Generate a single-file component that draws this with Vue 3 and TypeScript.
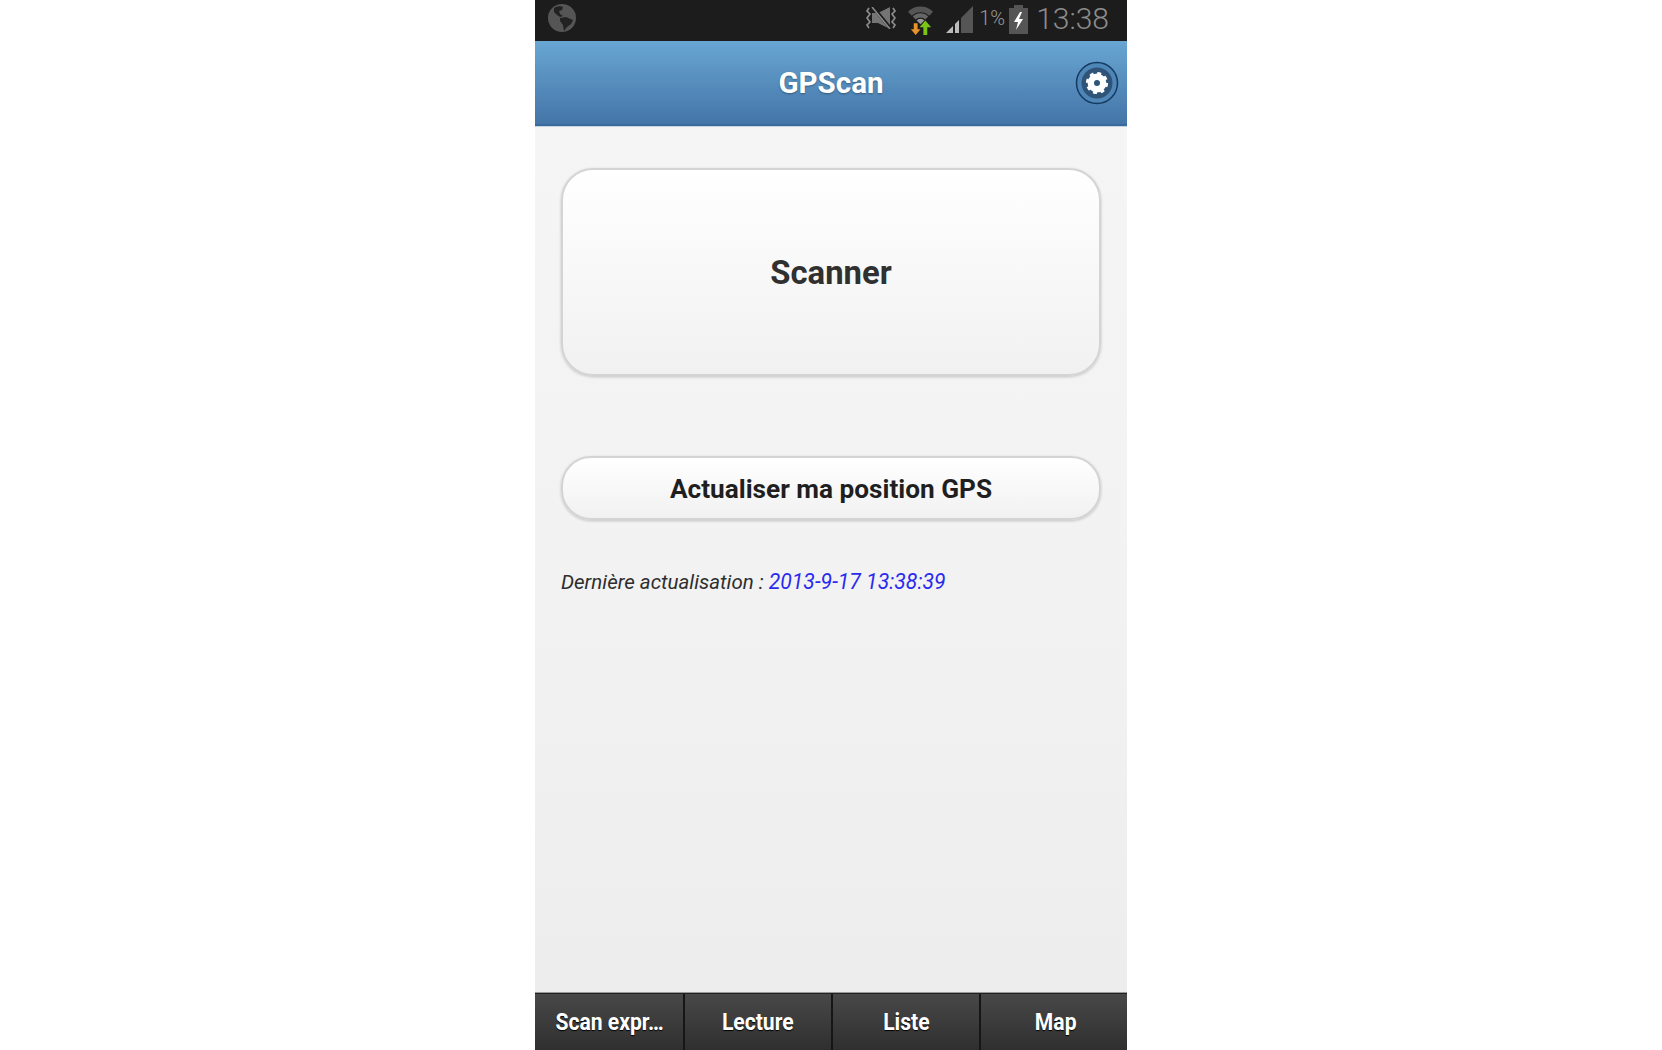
<template>
  <div class="page">
    <div class="phone">
      <div class="status-bar">
        <svg class="globe" width="30" height="30" viewBox="0 0 30 30">
          <circle cx="15" cy="15" r="14" fill="#555" />
          <path d="M7 5 C10 3 14 3 16 4 L15 7 L12 8 L13 11 L16 13 L13 14 L10 12 L7 9 Z" fill="#222" />
          <path d="M13 15 L19 14 L26 17 L24 21 L20 24 L17 28 L16 22 L13 18 Z" fill="#222" />
        </svg>
        <div class="status-right">
          <svg class="ic-vib" width="30" height="22" viewBox="0 0 30 22">
            <path d="M6 6 H12 L24 0 V22 L12 16 H6 Z" fill="#747474" />
            <path d="M7 0 L25 22" stroke="#1c1c1c" stroke-width="3.4" />
            <path d="M6 0 L24 22" stroke="#8c8c8c" stroke-width="1.5" />
            <path d="M3 1 L1 4 L4 7 L1 11 L4 15 L1 18 L3 21" fill="none" stroke="#8c8c8c" stroke-width="1.7" />
            <path d="M27 1 L29 4 L26 7 L29 11 L26 15 L29 18 L27 21" fill="none" stroke="#8c8c8c" stroke-width="1.7" />
          </svg>
          <svg class="ic-wifi" width="27" height="31" viewBox="0 0 28 32">
            <path d="M1 8 A18 18 0 0 1 27 8 L23 12 A13 13 0 0 0 5 12 Z" fill="#555" />
            <path d="M6 13 A11 11 0 0 1 22 13 L19 16 A7 7 0 0 0 9 16 Z" fill="#666" />
            <path d="M10 17 A5.5 5.5 0 0 1 18 17 L14 21 Z" fill="#999" />
            <path d="M7 20 H11 V26 H14 L9 32 L4 26 H7 Z" fill="#e8922a" />
            <path d="M17 32 H21 V24 H25 L19 17 L13 24 H17 Z" fill="#7cc416" />
          </svg>
          <svg class="ic-signal" width="27" height="27" viewBox="0 0 27 27">
            <path d="M0 27 L7 20 V27 Z" fill="#bbb" />
            <path d="M9 18 L13 14 V27 H9 Z" fill="#bbb" />
            <path d="M15 12 L27 0 V27 H15 Z" fill="#555" />
          </svg>
          <span class="batt-pct">1%</span>
          <svg class="ic-batt" width="19" height="29" viewBox="0 0 19 29">
            <path d="M5 0 H14 V3 H19 V29 H0 V3 H5 Z" fill="#555" />
            <path d="M11 7 L5 17 H9 L7 25 L14 14 H10 L13 7 Z" fill="#fff" />
          </svg>
          <span class="time">13:38</span>
        </div>
      </div>

      <header class="app-header">
        <h1>GPScan</h1>
        <button class="settings" type="button">
          <svg width="44" height="44" viewBox="0 0 44 44">
            <circle cx="22" cy="22" r="20.5" fill="#4e86b8" stroke="#143a60" stroke-width="1.5" />
            <circle cx="22" cy="22" r="15.5" fill="#2f5478" />
            <circle cx="22" cy="22" r="6.2" fill="none" stroke="#fff" stroke-width="6.4" />
            <circle cx="22" cy="22" r="9.6" fill="none" stroke="#fff" stroke-width="3" stroke-dasharray="3.8 3.74" />
          </svg>
        </button>
      </header>

      <main class="content">
        <button class="btn scanner" type="button">Scanner</button>
        <button class="btn refresh" type="button">Actualiser ma position GPS</button>
        <p class="last-update">Dernière actualisation : <span class="stamp">{{ lastUpdate }}</span></p>
      </main>

      <nav class="tabs">
        <div v-for="tab in tabs" :key="tab" class="tab"><span>{{ tab }}</span></div>
      </nav>
    </div>
  </div>
</template>

<script setup lang="ts">
const lastUpdate = '2013-9-17 13:38:39'
const tabs: string[] = ['Scan expr…', 'Lecture', 'Liste', 'Map']
</script>

<style>
html, body {
  margin: 0;
  background: #fff;
  overflow: hidden;
}
</style>

<style scoped>
.page {
  display: flex;
  justify-content: center;
  height: 1050px;
  font-family: Roboto, "Liberation Sans", sans-serif;
}
.phone {
  display: flex;
  flex-direction: column;
  width: 592px;
  height: 1050px;
}
.status-bar {
  display: flex;
  align-items: center;
  justify-content: space-between;
  flex: 0 0 41px;
  box-sizing: border-box;
  padding: 0 18px 5px 12px;
  background: #1c1c1c;
}
.status-right {
  display: flex;
  align-items: center;
}
.ic-vib { margin-right: 11px; }
.ic-wifi { margin-right: 12px; margin-top: 2px; }
.ic-signal { margin-right: 6px; margin-top: 3px; }
.batt-pct {
  margin-right: 4px;
  color: #999;
  font-size: 20px;
  font-weight: 300;
}
.ic-batt { margin-right: 8px; margin-top: 2px; }
.time {
  color: #8c8c8c;
  font-size: 30px;
  font-weight: 300;
}
.app-header {
  display: flex;
  align-items: center;
  justify-content: center;
  position: relative;
  flex: 0 0 85px;
  box-sizing: border-box;
  background: linear-gradient(#68a6d3, #4475a8);
  border-bottom: 2px solid #3a6a9b;
  box-shadow: 0 1px 0 #c5d2df;
}
.app-header h1 {
  margin: 0;
  color: #fff;
  font-size: 29.5px;
  font-weight: 700;
  text-shadow: 0 1px 2px rgba(0, 0, 0, 0.35);
}
.settings {
  position: absolute;
  right: 8px;
  top: 20px;
  display: flex;
  padding: 0;
  background: none;
  border: 0;
}
.content {
  display: flex;
  flex-direction: column;
  flex: 1;
  padding: 42px 26px 0;
  background: linear-gradient(#f5f5f5, #f2f2f2 55%, #ededed);
}
.btn {
  box-sizing: border-box;
  width: 100%;
  padding: 1px 0 0;
  font-family: inherit;
  font-weight: 700;
  background: linear-gradient(#fff, #f1f1f1);
  border: 2px solid #d4d4d4;
  box-shadow: 0 1px 3px rgba(0, 0, 0, 0.2);
}
.scanner {
  flex: 0 0 208px;
  color: #303030;
  font-size: 32.8px;
  border-radius: 32px;
}
.refresh {
  flex: 0 0 64px;
  margin-top: 80px;
  color: #1f1f1f;
  font-size: 26.2px;
  border-radius: 30px;
}
.last-update {
  margin: 49px 0 0;
  color: #2e2e2e;
  font-size: 20.5px;
  font-style: italic;
}
.stamp {
  color: #2a2aee;
  font-size: 21.2px;
}
.tabs {
  display: grid;
  grid-template-columns: repeat(4, 1fr);
  flex: 0 0 57px;
  box-sizing: border-box;
  background: linear-gradient(#484848, #2f2f2f);
  border-top: 1px solid #222;
  box-shadow: 0 -1px 0 #999;
}
.tab {
  display: flex;
  align-items: center;
  justify-content: center;
  box-sizing: border-box;
  border-left: 2px solid #161616;
  color: #fff;
  font-size: 24px;
  font-weight: 700;
  text-shadow: 0 1px 1px #000;
}
.tab:first-child { border-left: 0; }
.tab:last-child { padding-left: 4px; }
.tab span {
  transform: scaleX(0.88);
  white-space: nowrap;
}
</style>
